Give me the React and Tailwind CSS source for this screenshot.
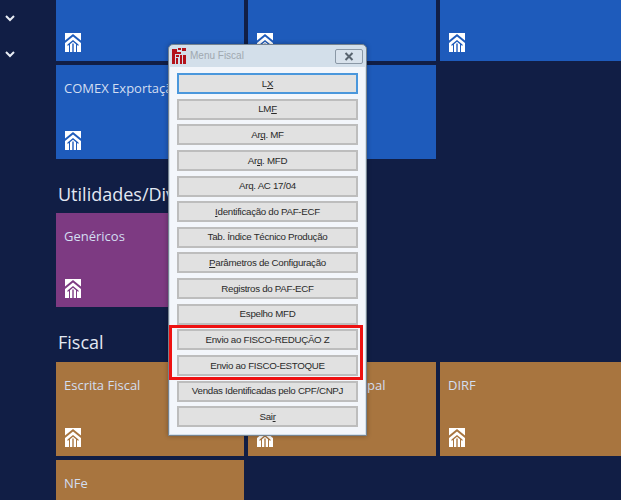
import React from 'react';

const HomeIcon = () => (
  <svg width="16" height="19" viewBox="0 0 16 19" className="mt-auto shrink-0 ml-[1px]">
    <path
      fill="#fff"
      fillRule="evenodd"
      d="M0 0H16V19H0Z M0 7.5L8 1L16 7.5V10L8 3.5L0 10Z M2.5 11.5L8 7L13.5 11.5V13L12 12V19H11V11.2L8 8.8L5 11.2V19H4V12L2.5 13Z M7.3 10.5H8.7V19H7.3Z"
    />
  </svg>
);

const FiscalLogo = () => (
  <svg width="14" height="16" viewBox="0 0 14 16" className="shrink-0">
    <path fill="#b3121a" d="M0 1H5V4H3V16H0Z M6 0H9V2H6Z M10 0H14V3H10Z M3 4H9V6H3Z M4 7H7V9H4Z M8 7H10V16H8Z M11 7H14V16H11Z M4 10H6V16H4Z" />
  </svg>
);

const Tile = ({ color, label, labelClass = '', icon = true }) => (
  <div className={`h-[94px] flex flex-col px-[8px] pt-[14px] pb-[9px] ${color}`}>
    {label && <span className={`text-[13px] leading-[18px] text-[#d3def1] whitespace-nowrap ${labelClass}`}>{label}</span>}
    {icon && <HomeIcon />}
  </div>
);

const buttons = [
  { text: 'LX', under: 'X' },
  { text: 'LMF', under: 'F' },
  { text: 'Arq. MF', under: 'q' },
  { text: 'Arq. MFD', under: 'q' },
  { text: 'Arq. AC 17/04' },
  { text: 'Identificação do PAF-ECF', under: 'I' },
  { text: 'Tab. Índice Técnico Produção' },
  { text: 'Parâmetros de Configuração', under: 'P' },
  { text: 'Registros do PAF-ECF' },
  { text: 'Espelho MFD' },
  { text: 'Envio ao FISCO-REDUÇÃO Z' },
  { text: 'Envio ao FISCO-ESTOQUE' },
  { text: 'Vendas Identificadas pelo CPF/CNPJ' },
  { text: 'Sair', under: 'r' },
];

const ButtonLabel = ({ text, under }) => {
  if (!under) return text;
  const i = text.indexOf(under);
  return (
    <>
      {text.slice(0, i)}
      <span className="underline">{under}</span>
      {text.slice(i + 1)}
    </>
  );
};

export default function App() {
  return (
    <div className="relative w-[621px] h-[500px] overflow-hidden flex bg-[#111e45] font-['Open_Sans',sans-serif]">
      {/* Side chevrons */}
      <div className="w-[56px] shrink-0 flex flex-col gap-[26px] pt-[13px] pl-[5px]">
        <svg width="10" height="10" viewBox="0 0 10 10" fill="none" stroke="#e8edf5" strokeWidth="2"><path d="M1 3L5 7L9 3" /></svg>
        <svg width="10" height="10" viewBox="0 0 10 10" fill="none" stroke="#e8edf5" strokeWidth="2"><path d="M1 3L5 7L9 3" /></svg>
      </div>

      {/* Tiles */}
      <div className="w-[580px] shrink-0 -mt-[33px] flex flex-col">
        <div className="shrink-0 grid grid-cols-[188px_188px_188px] gap-[4px]">
          <Tile color="bg-[#1e5bbb]" />
          <Tile color="bg-[#1e5bbb]" />
          <Tile color="bg-[#1e5bbb]" />
          <Tile color="bg-[#1e5bbb]" label="COMEX Exportação" />
          <Tile color="bg-[#1e5bbb]" />
        </div>
        <h2 className="shrink-0 mt-[21px] h-[33px] text-[18px] leading-[28px] text-[#e3e8f2] pl-[2px]">Utilidades/Diversos</h2>
        <div className="shrink-0 grid grid-cols-[188px_188px_188px] gap-[4px]">
          <Tile color="bg-[#7d3a82]" label="Genéricos" />
        </div>
        <h2 className="shrink-0 mt-[21px] h-[34px] text-[18px] leading-[28px] text-[#e3e8f2] pl-[2px]">Fiscal</h2>
        <div className="shrink-0 grid grid-cols-[188px_188px_188px] gap-[4px]">
          <Tile color="bg-[#a8753f]" label="Escrita Fiscal" />
          <Tile color="bg-[#a8753f]" label="pal" labelClass="pl-[111px]" />
          <Tile color="bg-[#a8753f]" label="DIRF" />
          <Tile color="bg-[#a8753f]" label="NFe" icon={false} />
        </div>
      </div>

      {/* Menu Fiscal dialog */}
      <div className="absolute left-[168px] top-[44px] w-[199px] h-[392px] flex flex-col rounded-t-[5px] border border-[#76838f] bg-[#d3dfea] px-[1px] pb-[1px] shadow-[0_0_5px_rgba(0,0,0,0.3)]">
        <div className="h-[22px] shrink-0 flex items-center pl-[2px] pr-[2px] gap-[4px]">
          <FiscalLogo />
          <span className="text-[10px] leading-none text-[#a0a8b0] font-['Liberation_Sans',sans-serif]">Menu Fiscal</span>
          <div className="ml-auto h-[15px] w-[28px] flex items-center justify-center rounded-[2px] border border-[#8a98a6] bg-[#d8e2ec]">
            <svg width="10" height="9" viewBox="0 0 10 9" fill="none" stroke="#59646f" strokeWidth="2"><path d="M1.5 1L8.5 8M8.5 1L1.5 8" /></svg>
          </div>
        </div>
        <div className="flex-1 flex flex-col gap-[4.64px] bg-[#f3f6fb] px-[7px] pt-[6px]">
          {buttons.map((b, i) => (
            <div
              key={b.text}
              className={`h-[21px] shrink-0 flex items-center justify-center border-2 text-[9.75px] leading-none text-[#2a2a2a] bg-[#e1e1e1] font-['Liberation_Sans',sans-serif] tracking-[-0.3px] ${i === 0 ? 'border-[#4a97dc]' : 'border-[#bdbdbd]'}`}
            >
              <ButtonLabel text={b.text} under={b.under} />
            </div>
          ))}
        </div>
      </div>

      {/* Red highlight */}
      <div className="absolute left-[169px] top-[325px] w-[194px] h-[55px] border-[3px] border-[#ee1111]" />
    </div>
  );
}
